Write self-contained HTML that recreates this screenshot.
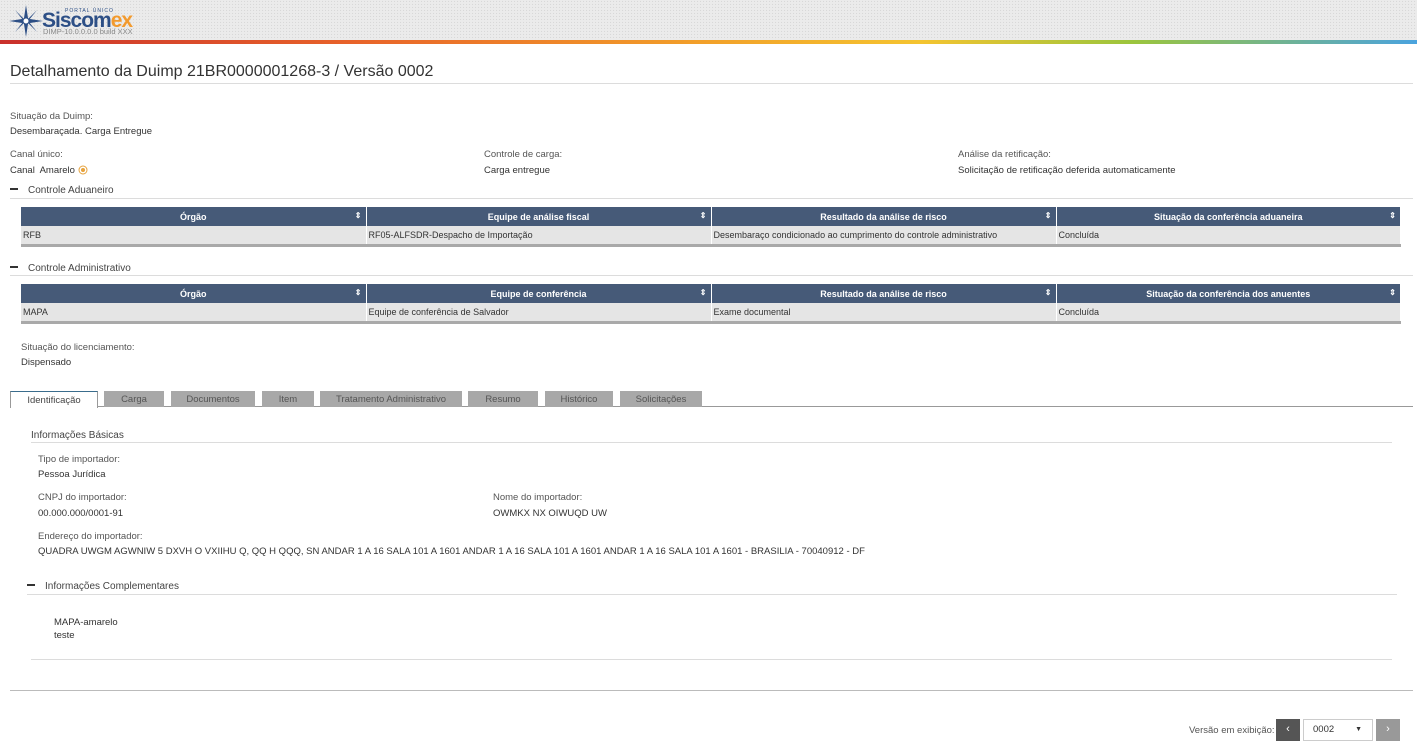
<!DOCTYPE html>
<html><head><meta charset="utf-8">
<style>
*{margin:0;padding:0;box-sizing:border-box}
body{width:1417px;height:745px;background:#fff;font-family:"Liberation Sans",sans-serif;font-size:9.5px;color:#333;position:relative;overflow:hidden}
.a{position:absolute;white-space:nowrap}
.lbl{color:#555}
.hdr{position:absolute;left:0;top:0;width:1417px;height:40px;background:#ebebeb;background-image:radial-gradient(#d8d8d8 0.6px,transparent 0.8px);background-size:3px 3px}
.bar{position:absolute;left:0;top:40px;width:1417px;height:4px;background:linear-gradient(90deg,#c9302c 0%,#e8632a 25%,#f2a12a 50%,#f4c430 65%,#9bc53d 80%,#4aa3df 100%)}
.line{position:absolute;height:1px;background:#dcdcdc}
.sec{position:absolute;font-size:10px;color:#444}
.sec b{display:inline-block;width:8px;height:2px;background:#333;vertical-align:middle;margin-right:10px;position:relative;top:-1px}
table{position:absolute;border-collapse:collapse;font-size:9px}
th{background:#465a78;color:#fff;font-weight:bold;height:19px;border-right:1px solid #fff;position:relative;text-align:center}
th span.s{position:absolute;right:4px;top:4px;font-size:8px}
td{background:#e5e5e5;height:19px;padding-left:2px;border-right:1px solid #fff;border-bottom:3px solid #a9a9a9;color:#333}
.tab{position:absolute;top:391px;height:16px;background:#a8a8a8;color:#555;font-size:9.5px;text-align:center;line-height:18px}
</style></head><body>
<div class="hdr"></div>
<div class="bar"></div>
<svg class="a" style="left:9px;top:5px" width="34" height="32" viewBox="0 0 34 32">
<g fill="#2d4f86"><polygon points="17,0 19,13 17,16 15,13"/><polygon points="17,32 19,19 17,16 15,19"/><polygon points="0,16 13,14 17,16 13,18"/><polygon points="34,16 21,14 17,16 21,18"/>
<polygon points="6,5 15,14 17,16 14,15"/><polygon points="28,5 19,14 17,16 20,15"/><polygon points="6,27 15,18 17,16 14,17"/><polygon points="28,27 19,18 17,16 20,17"/></g>
<circle cx="17" cy="16" r="3" fill="#fff" stroke="#2d4f86"/></svg>
<div class="a" style="left:65px;top:8px;font-size:5px;color:#2d4f86;letter-spacing:1px">PORTAL ÚNICO</div>
<div class="a" style="left:42px;top:9px;font-size:21px;font-weight:bold;color:#2d4f86;letter-spacing:-1px">Siscom<span style="color:#f29a2e">ex</span></div>
<div class="a" style="left:43px;top:27px;font-size:7.5px;color:#888">DIMP-10.0.0.0.0 build XXX</div>

<div class="a" style="left:10px;top:63px;font-size:16px;color:#333">Detalhamento da Duimp 21BR0000001268-3 / Versão 0002</div>
<div class="line" style="left:10px;top:83px;width:1403px"></div>

<div class="a lbl" style="left:10px;top:111px">Situação da Duimp:</div>
<div class="a" style="left:10px;top:126px">Desembaraçada. Carga Entregue</div>
<div class="a lbl" style="left:10px;top:149px">Canal único:</div>
<div class="a" style="left:10px;top:165px">Canal&nbsp; Amarelo <svg width="10" height="10" style="vertical-align:middle"><circle cx="5" cy="5" r="4" fill="#fff" stroke="#e6a23c"/><circle cx="5" cy="5" r="2" fill="#e6a23c"/></svg></div>
<div class="a lbl" style="left:484px;top:149px">Controle de carga:</div>
<div class="a" style="left:484px;top:165px">Carga entregue</div>
<div class="a lbl" style="left:958px;top:149px">Análise da retificação:</div>
<div class="a" style="left:958px;top:165px">Solicitação de retificação deferida automaticamente</div>

<div class="sec" style="left:10px;top:185px"><b></b>Controle Aduaneiro</div>
<div class="line" style="left:10px;top:198px;width:1403px"></div>
<table style="left:21px;top:207px;width:1380px">
<tr><th style="width:345px">Órgão<span class="s">⇕</span></th><th style="width:345px">Equipe de análise fiscal<span class="s">⇕</span></th><th style="width:345px">Resultado da análise de risco<span class="s">⇕</span></th><th>Situação da conferência aduaneira<span class="s">⇕</span></th></tr>
<tr><td>RFB</td><td>RF05-ALFSDR-Despacho de Importação</td><td>Desembaraço condicionado ao cumprimento do controle administrativo</td><td>Concluída</td></tr>
</table>

<div class="sec" style="left:10px;top:263px"><b></b>Controle Administrativo</div>
<div class="line" style="left:10px;top:275px;width:1403px"></div>
<table style="left:21px;top:284px;width:1380px">
<tr><th style="width:345px">Órgão<span class="s">⇕</span></th><th style="width:345px">Equipe de conferência<span class="s">⇕</span></th><th style="width:345px">Resultado da análise de risco<span class="s">⇕</span></th><th>Situação da conferência dos anuentes<span class="s">⇕</span></th></tr>
<tr><td>MAPA</td><td>Equipe de conferência de Salvador</td><td>Exame documental</td><td>Concluída</td></tr>
</table>

<div class="a lbl" style="left:21px;top:342px">Situação do licenciamento:</div>
<div class="a" style="left:21px;top:357px">Dispensado</div>

<div class="line" style="left:10px;top:406px;width:1403px;background:#999"></div>
<div class="tab" style="left:10px;width:88px;background:#fff;border:1px solid #999;border-top:1px solid #3a6c8c;border-bottom:none;height:17px;color:#444">Identificação</div>
<div class="tab" style="left:104px;width:60px">Carga</div>
<div class="tab" style="left:171px;width:84px">Documentos</div>
<div class="tab" style="left:262px;width:52px">Item</div>
<div class="tab" style="left:320px;width:142px">Tratamento Administrativo</div>
<div class="tab" style="left:468px;width:70px">Resumo</div>
<div class="tab" style="left:545px;width:68px">Histórico</div>
<div class="tab" style="left:620px;width:82px">Solicitações</div>

<div class="a" style="left:31px;top:430px;font-size:10px;color:#444">Informações Básicas</div>
<div class="line" style="left:31px;top:442px;width:1361px"></div>
<div class="a lbl" style="left:38px;top:454px">Tipo de importador:</div>
<div class="a" style="left:38px;top:469px">Pessoa Jurídica</div>
<div class="a lbl" style="left:38px;top:492px">CNPJ do importador:</div>
<div class="a" style="left:38px;top:508px">00.000.000/0001-91</div>
<div class="a lbl" style="left:493px;top:492px">Nome do importador:</div>
<div class="a" style="left:493px;top:508px">OWMKX NX OIWUQD UW</div>
<div class="a lbl" style="left:38px;top:531px">Endereço do importador:</div>
<div class="a" style="left:38px;top:546px">QUADRA UWGM AGWNIW 5 DXVH O VXIIHU Q, QQ H QQQ, SN ANDAR 1 A 16 SALA 101 A 1601 ANDAR 1 A 16 SALA 101 A 1601 ANDAR 1 A 16 SALA 101 A 1601 - BRASILIA - 70040912 - DF</div>

<div class="sec" style="left:27px;top:581px"><b></b>Informações Complementares</div>
<div class="line" style="left:27px;top:594px;width:1370px"></div>
<div class="a" style="left:54px;top:617px">MAPA-amarelo</div>
<div class="a" style="left:54px;top:630px">teste</div>
<div class="line" style="left:31px;top:659px;width:1361px"></div>
<div class="line" style="left:10px;top:690px;width:1403px;background:#bbb"></div>

<div class="a lbl" style="left:1189px;top:725px">Versão em exibição:</div>
<div class="a" style="left:1276px;top:719px;width:24px;height:22px;background:#555;color:#fff;text-align:center;line-height:21px;font-size:11px">‹</div>
<div class="a" style="left:1303px;top:719px;width:70px;height:22px;border:1px solid #ccc;line-height:20px;padding-left:9px">0002<span style="position:absolute;right:10px;font-size:7px">▼</span></div>
<div class="a" style="left:1376px;top:719px;width:24px;height:22px;background:#999;color:#fff;text-align:center;line-height:21px;font-size:11px">›</div>
</body></html>
